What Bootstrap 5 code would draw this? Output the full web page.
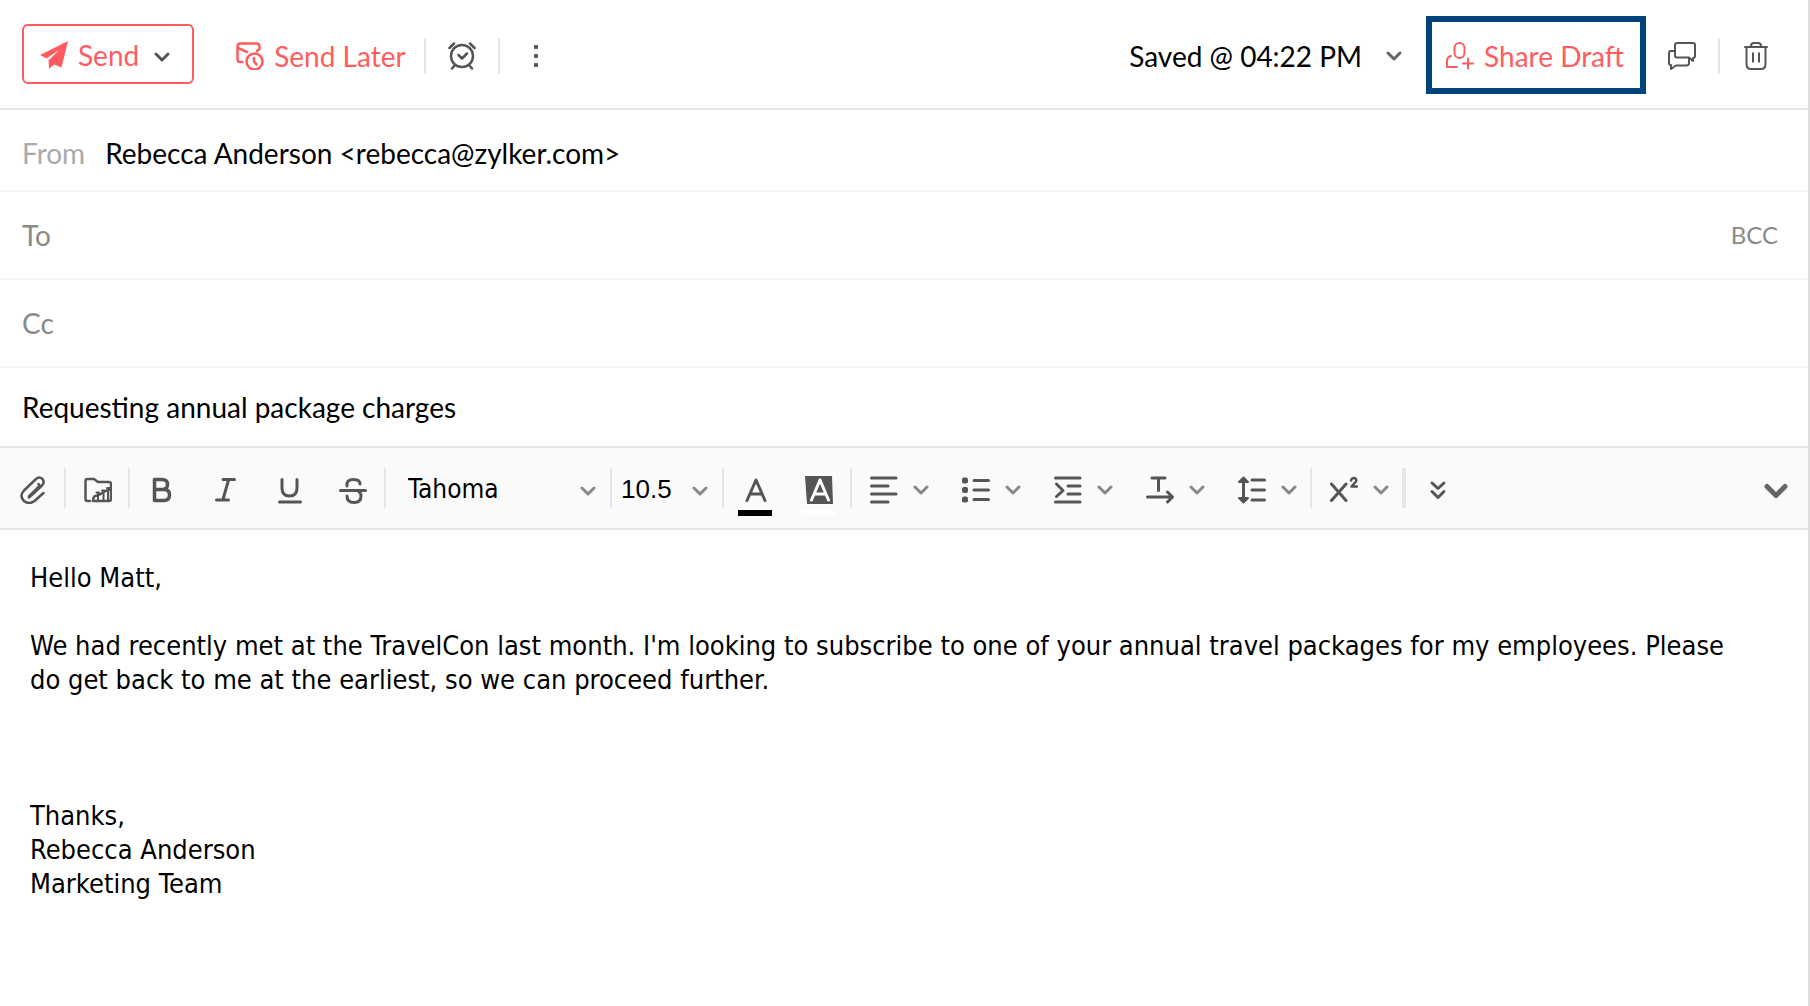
<!DOCTYPE html>
<html lang="en">
<head>
<meta charset="utf-8">
<meta name="viewport" content="width=device-width, initial-scale=1">
<title>Compose mail</title>
<link href="https://cdn.jsdelivr.net/npm/bootstrap@5.3.0/dist/css/bootstrap.min.css" rel="stylesheet">
<style>
  :root { --accent: #ff5c5f; --ink: #555; --line: #e6e6e6; --soft: #f6f6f6; }
  body { font-family: Lato, sans-serif; font-size: 28px; line-height: 36px; color: #000; background: #fff; }
  svg { display: block; flex: none; fill: none; stroke: currentColor; stroke-linecap: round; stroke-linejoin: round; stroke-width: 2; }
  .ico { width: 28px; height: 28px; }
  .chev { width: 16px; height: 10px; stroke-width: 3; }
  .composer { border-right: 2px solid #dedede; }
  .composer .btn { font-size: inherit; line-height: inherit; padding: 0; border: 0; border-radius: 0; color: var(--ink); display: flex; align-items: center; }
  .composer .btn.accent { color: var(--accent); }
  .actions { height: 110px; border-bottom: 2px solid var(--line); padding: 4px 38px 0 22px; gap: 22px; }
  .rule { width: 2px; height: 36px; background: var(--line); flex: none; }
  .send-box { border: 2px solid var(--accent); border-radius: 6px; height: 60px; padding: 2px 22px 0 16px; gap: 15px; margin: 0 20px 4px 0; }
  .later { gap: 18px; }
  .composer .with-icon { gap: 10px; }
  .composer .saved { color: #000; gap: 24px; margin-right: 2px; }
  .composer .share { border: 6px solid #00437a; height: 78px; padding: 2px 16px 0 14px; gap: 10px; margin-bottom: 2px; }
  .field { height: 88px; padding: 0 30px 0 22px; border-bottom: 2px solid var(--soft); color: #8a8a8a; }
  .field.short { height: 82px; padding-top: 5px; }
  .field.subject { height: 78px; border-bottom: 0; }
  .field label.dim { color: #aaa; }
  .field input { border: 0; outline: 0; padding: 0; background: none; color: #000; min-width: 0; }
  .field .btn.bcc { color: #8a8a8a; font-size: 24px; }
  .tools { min-height: 84px; background: #fafafa; border: solid var(--line); border-width: 2px 0; }
  .cell { position: relative; }
  .composer .tools .btn { height: 40px; padding-top: 3px; }
  .composer .tools .one { width: 64px; padding-left: 2px; justify-content: center; }
  .composer .tools .pair { width: 92px; padding-left: 20px; gap: 15px; }
  .composer .tools .pair .chev { color: #888; }
  .composer .tools .split { border-left: 2px solid var(--line); }
  .composer .tools .pair.split { padding-left: 18px; }
  .composer .tools .more { width: 68px; border-left: 4px solid var(--line); justify-content: center; }
  .composer .tools .fold { padding: 6px 20px 0 0; }
  .tools select { height: 40px; border: 0; border-left: 2px solid var(--line); border-radius: 0; padding: 2px 40px 0 22px; color: #000; font-size: 26px; line-height: 34px;
    background: transparent url("data:image/svg+xml,%3Csvg xmlns='http://www.w3.org/2000/svg' viewBox='0 0 16 10' fill='none' stroke='%23888' stroke-width='3' stroke-linecap='round' stroke-linejoin='round'%3E%3Cpath d='M2 2l6 6 6-6'/%3E%3C/svg%3E") no-repeat right 14px top 18px / 16px 10px; }
  .tools .family { width: 226px; font-family: "DejaVu Sans Condensed", "Noto Sans", sans-serif; }
  .tools .size { width: 112px; padding-left: 9px; font-family: "Liberation Sans", sans-serif; }
  .swatch { position: absolute; left: 50%; bottom: -8px; width: 34px; height: 6px; margin-left: -17px; background: #000; }
  .swatch.blank { background: #fff; }
  .thick { stroke-width: 3; }
  .medium { stroke-width: 2.5; }
  .message { font-family: "DejaVu Sans Condensed", "Noto Sans", sans-serif; font-size: 27px; line-height: 34px; padding: 31px 60px 31px 30px; outline: 0; }
  .message p { margin: 0 0 34px; }
  .message .signature { margin-top: 102px; }
</style>
<script src="https://cdn.jsdelivr.net/npm/bootstrap@5.3.0/dist/js/bootstrap.bundle.min.js" defer></script>
</head>
<body>
<svg class="d-none" aria-hidden="true">
  <symbol id="down" viewBox="0 0 16 10"><path d="M2 2l6 6 6-6"/></symbol>
</svg>
<main class="composer min-vh-100">
  <header class="actions d-flex align-items-center">
    <div class="send-box d-flex align-items-center">
      <button type="button" class="btn accent with-icon">
        <svg class="ico" viewBox="0 0 28 28"><path fill="currentColor" stroke="none" d="M28 0 0 14 6.500 17.500 19 9 8.500 19.500 9 28 14 23.500 21.500 26.500Z"/></svg>
        <span>Send</span>
      </button>
      <button type="button" class="btn pt-1" aria-label="Send options"><svg class="chev"><use href="#down"/></svg></button>
    </div>
    <div class="later d-flex align-items-center">
      <button type="button" class="btn accent with-icon">
        <svg class="ico medium" viewBox="0 0 28 28"><path d="M6.500 20H4Q1.500 20 1.500 17V4.500Q1.500 1.500 4.500 1.500H20.500Q23.500 1.500 23.500 4.500V7L21 9M2 6l9 4"/><circle cx="18.500" cy="19.500" r="8"/><path d="M18 16v3.500l2.500 3"/></svg>
        <span>Send Later</span>
      </button>
      <span class="rule"></span>
    </div>
    <button type="button" class="btn" aria-label="Set reminder">
      <svg class="ico medium" viewBox="0 0 28 28"><circle cx="14" cy="14" r="11"/><path d="M10.500 13l3.500 3.500 5-5M1.500 6l4.500-4.500M26.500 6l-4.500-4.500M7 23 4 26.500M21 23l3 3.500"/></svg>
    </button>
    <span class="rule"></span>
    <button type="button" class="btn" aria-label="More actions">
      <svg class="ico" viewBox="0 0 28 28"><g fill="currentColor" stroke="none"><rect x="12" y="3" width="4" height="4" rx="1"/><rect x="12" y="12" width="4" height="4" rx="1"/><rect x="12" y="21" width="4" height="4" rx="1"/></g></svg>
    </button>
    <button type="button" class="btn saved ms-auto"><span>Saved @ 04:22 PM</span><svg class="chev" color="#666"><use href="#down"/></svg></button>
    <button type="button" class="btn accent share">
      <svg class="ico" viewBox="0 0 28 28"><rect x="8.500" y="1" width="10" height="15" rx="5"/><path d="M5 14Q1 15 1 19V25H11M17 21.500H27M22 16.500v10"/></svg>
      <span>Share Draft</span>
    </button>
    <button type="button" class="btn" aria-label="Comments">
      <svg class="ico" viewBox="0 0 28 28"><path d="M9 1H25Q27 1 27 3V14Q27 16 25 16V19L21 15.500H9Q7 15.500 7 13.500V3Q7 1 9 1ZM7 9H3Q1 9 1 11V21Q1 23 3 23V27L8 23.500H18Q21 23.500 21 21V16"/></svg>
    </button>
    <span class="rule"></span>
    <button type="button" class="btn" aria-label="Discard draft">
      <svg class="ico" viewBox="0 0 28 28"><path d="M3 5H25M9 4Q9 1 12 1H16Q19 1 19 4M4.500 5V22Q4.500 27 9 27H19Q23.500 27 23.500 22V5"/><path stroke-linecap="butt" d="M11 10.500v10M17 10.500v10"/></svg>
    </button>
  </header>

  <div class="field short d-flex align-items-center"><label class="dim" for="from">From</label><input id="from" class="flex-grow-1 ms-3 ps-1" value="Rebecca Anderson &lt;rebecca@zylker.com&gt;" readonly></div>
  <div class="field d-flex align-items-center gap-3"><label for="to">To</label><input id="to" class="flex-grow-1"><button type="button" class="btn bcc">BCC</button></div>
  <div class="field d-flex align-items-center gap-3"><label for="cc">Cc</label><input id="cc" class="flex-grow-1"></div>
  <div class="field subject d-flex align-items-center"><input id="subject" class="flex-grow-1" aria-label="Subject" value="Requesting annual package charges"></div>

  <div class="tools d-flex align-items-center" role="toolbar" aria-label="Formatting">
    <button type="button" class="btn one" aria-label="Attach file"><svg class="ico" viewBox="0 0 28 28"><path stroke-width="2.500" d="M10 20.500 19.500 11Q21 9 19.500 8M24.500 17 15.500 25Q10 29 5 25Q0 20 5 14.500L17 3Q20 0 23.500 3Q26 6.500 23 9.500L10 21.500"/></svg></button>
    <button type="button" class="btn one split" aria-label="Insert image"><svg class="ico" viewBox="0 0 28 28"><path stroke-width="2.500" d="M6 25H3.500Q1.500 25 1.500 23V5Q1.500 3 3.500 3H10L14 6H25Q27 6 27 8V23Q27 25 25 25H9Q9 19 14 19.500L26 12.500"/><path d="M14 24v-7M19.500 24v-9M24 24V13M12.500 16.500h2.500M18 14.500h2.500M23 12h2.500"/></svg></button>
    <button type="button" class="btn one split" aria-label="Bold"><svg class="ico" viewBox="0 0 28 28"><path stroke-width="3.500" d="M6.500 3.500H14Q19.500 3.500 19.500 8.500Q19.500 13.500 14 13.500H6.500H16Q21.500 13.500 21.500 19Q21.500 24.500 16 24.500H6.500Z"/></svg></button>
    <button type="button" class="btn one" aria-label="Italic"><svg class="ico thick" viewBox="0 0 28 28"><path d="M12 3.500H23.500M5.500 24H17.500M17.500 4 12 23.500"/></svg></button>
    <button type="button" class="btn one" aria-label="Underline"><svg class="ico thick" viewBox="0 0 28 28"><path d="M7 3.500V12Q7 20 14.500 20Q22 20 22 12V3.500M4.500 26H25.500"/></svg></button>
    <button type="button" class="btn one" aria-label="Strikethrough"><svg class="ico thick" viewBox="0 0 28 28"><path d="M8 10Q7 3.500 14.500 3.500Q21 3.500 21 8M1.500 14.500H26.500M8 20Q8 26.500 15 26.500Q22 26.500 22 20Q22 17 20 16"/></svg></button>
    <select class="form-select family" aria-label="Font family"><option>Tahoma</option></select>
    <select class="form-select size" aria-label="Font size"><option>10.5</option></select>
    <button type="button" class="btn one split cell" aria-label="Text colour"><svg class="ico thick" viewBox="0 0 28 28"><path d="M5 24.500 14 4 23 24.500M8.500 18H19.500"/></svg><span class="swatch"></span></button>
    <button type="button" class="btn one cell" aria-label="Highlight colour"><svg class="ico thick" viewBox="0 0 28 28"><path fill="currentColor" stroke="none" d="M0 0H27L28 28H2Z"/><path stroke="#fff" d="M6.500 24 15 4 23.500 24M9.500 18H20.500"/></svg><span class="swatch blank"></span></button>
    <button type="button" class="btn pair split" aria-label="Align"><svg class="ico thick" viewBox="0 0 28 28"><path d="M1.500 2H26M1.500 10H18M1.500 18H26M1.500 26H18"/></svg><svg class="chev"><use href="#down"/></svg></button>
    <button type="button" class="btn pair" aria-label="List"><svg class="ico thick" viewBox="0 0 28 28"><path d="M12 4.500H26.500M12 14H26.500M12 23.500H26.500"/><g fill="currentColor" stroke="none"><rect y="1.500" width="6" height="6" rx="2"/><rect y="11" width="6" height="6" rx="2"/><rect y="20.500" width="6" height="6" rx="2"/></g></svg><svg class="chev"><use href="#down"/></svg></button>
    <button type="button" class="btn pair" aria-label="Indent"><svg class="ico thick" viewBox="0 0 28 28"><path d="M1.500 2H26M14 10H26M14 18H26M1.500 26H26M2.500 8 9 14.500 2.500 20.500"/></svg><svg class="chev"><use href="#down"/></svg></button>
    <button type="button" class="btn pair" aria-label="Text direction"><svg class="ico thick" viewBox="0 0 28 28"><path d="M6 2H19M12.500 2.500V14.500M1.500 21H26M21.500 16 26.500 21 21.500 26"/></svg><svg class="chev"><use href="#down"/></svg></button>
    <button type="button" class="btn pair" aria-label="Line spacing"><svg class="ico thick" viewBox="0 0 28 28"><path d="M14 4H26.500M14 14H26.500M14 24H26.500M5.500 3V25"/><path fill="currentColor" stroke-width="2" d="M1 6 5.500 1.500 10 6ZM1 22 5.500 26.500 10 22Z"/></svg><svg class="chev"><use href="#down"/></svg></button>
    <button type="button" class="btn pair split" aria-label="Superscript"><svg class="ico thick" viewBox="0 0 28 28"><path d="M1.500 8 16 24.500M16 8 1.500 24.500"/><path stroke-width="2.500" d="M21 4.500Q21.500 2 24 2Q27 2.500 26 5.500L21.500 10.500H27"/></svg><svg class="chev"><use href="#down"/></svg></button>
    <button type="button" class="btn more" aria-label="More tools"><svg class="ico thick" viewBox="0 0 28 28"><path d="M8 7 14 12.500 20 7M8 15.500 14 21.500 20 15.500"/></svg></button>
    <button type="button" class="btn fold ms-auto" aria-label="Collapse toolbar"><svg width="24" height="18" viewBox="0 0 24 18" color="#666"><path stroke-width="5" d="M3 4.500 12 13.500 21 4.500"/></svg></button>
  </div>

  <div class="message" contenteditable="true" role="textbox" aria-multiline="true" aria-label="Message" spellcheck="false">
    <p>Hello Matt,</p>
    <p>We had recently met at the TravelCon last month. I'm looking to subscribe to one of your annual travel packages for my employees. Please do get back to me at the earliest, so we can proceed further.</p>
    <p class="signature">Thanks,<br>Rebecca Anderson<br>Marketing Team</p>
  </div>
</main>
</body>
</html>
